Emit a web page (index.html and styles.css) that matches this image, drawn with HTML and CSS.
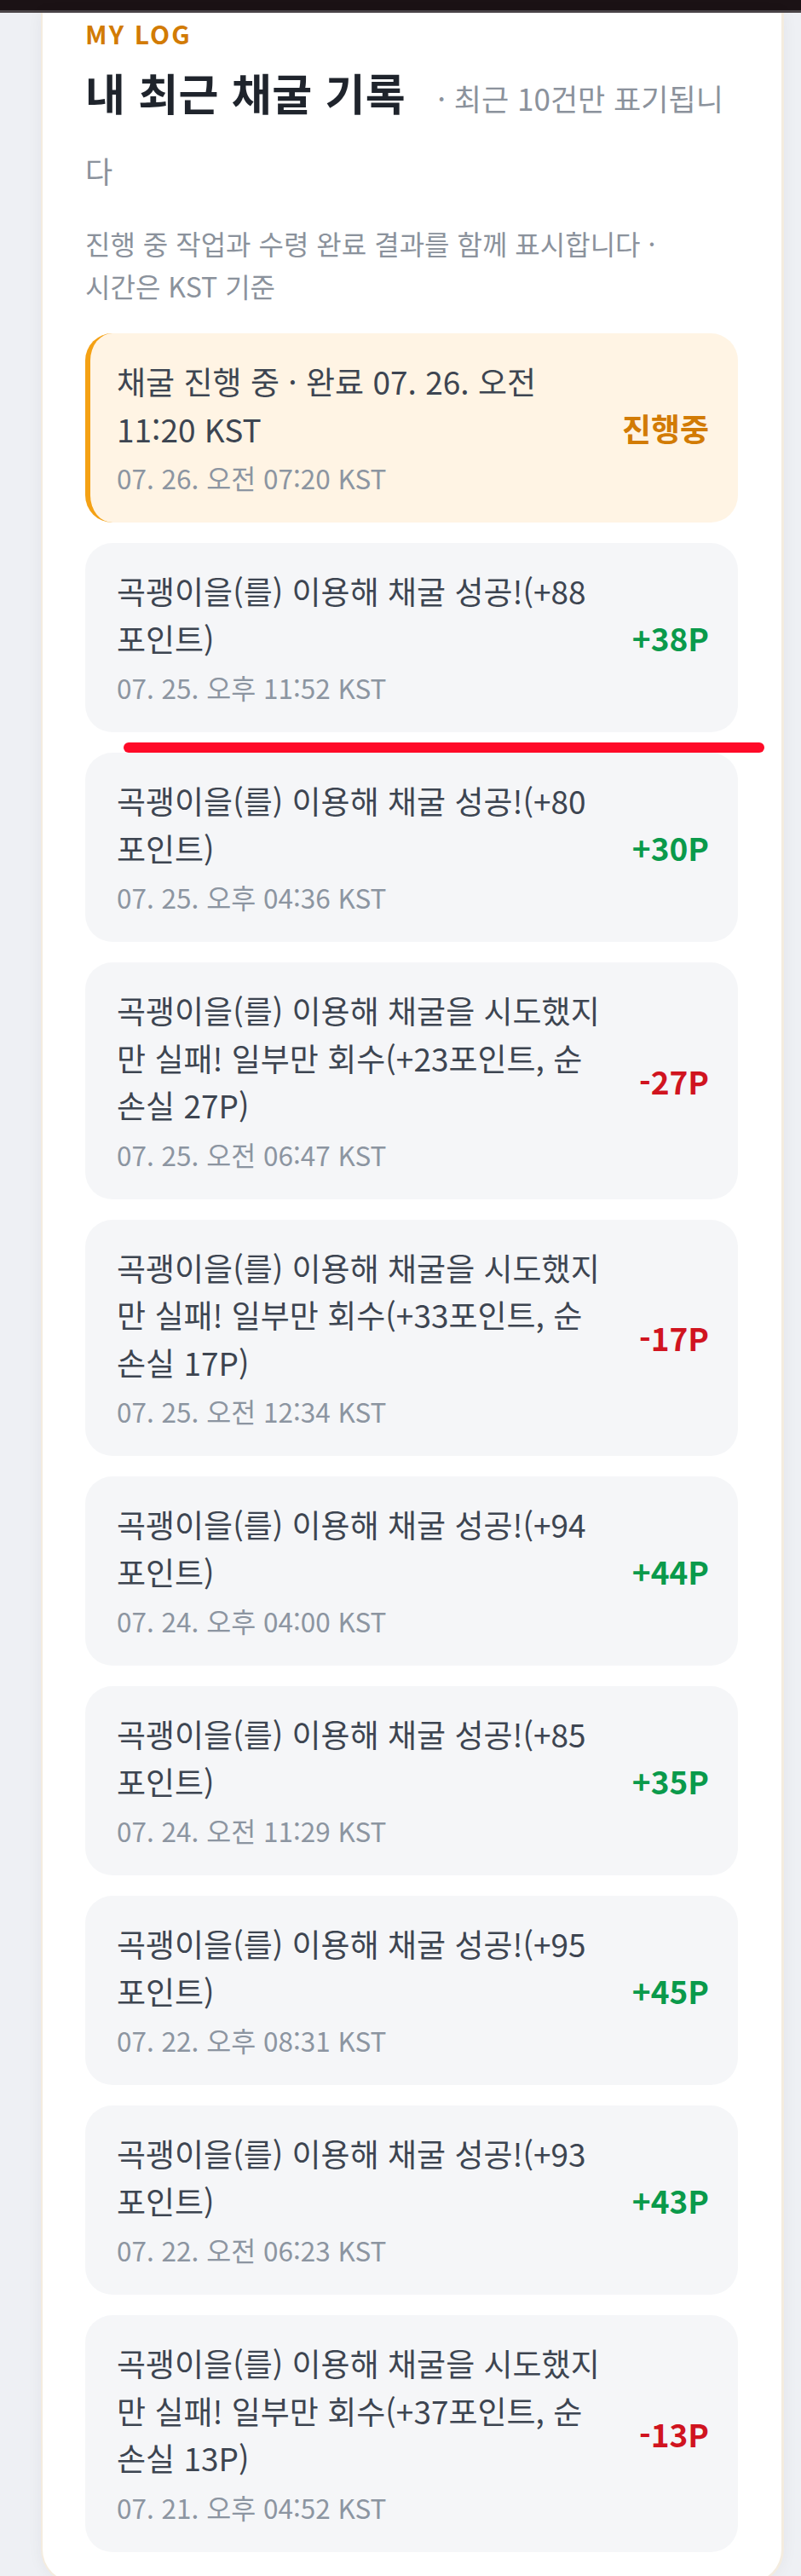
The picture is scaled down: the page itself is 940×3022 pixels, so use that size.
FILE: index.html
```html
<!DOCTYPE html>
<html lang="ko">
<head>
<meta charset="utf-8">
<title>MY LOG</title>
<link rel="stylesheet" href="styles.css">
</head>
<body>
<div class="topbar"></div>
<main class="card">
  <p class="eyebrow">MY LOG</p>
  <h2 class="title">내 최근 채굴 기록<span class="sub">· 최근 10건만 표기됩니다</span></h2>
  <p class="desc">진행 중 작업과 수령 완료 결과를 함께 표시합니다 · 시간은 KST 기준</p>
  <ul class="log">
    <li class="entry pending">
      <div class="main"><p class="msg">채굴 진행 중 · 완료 07. 26. 오전 11:20 KST</p><p class="time">07. 26. 오전 07:20 KST</p></div>
      <span class="amt amt-pending">진행중</span>
    </li>
    <li class="entry marked">
      <div class="main"><p class="msg">곡괭이을(를) 이용해 채굴 성공!(+88 포인트)</p><p class="time">07. 25. 오후 11:52 KST</p></div>
      <span class="amt amt-plus">+38P</span>
      <span class="mark"></span>
    </li>
    <li class="entry">
      <div class="main"><p class="msg">곡괭이을(를) 이용해 채굴 성공!(+80 포인트)</p><p class="time">07. 25. 오후 04:36 KST</p></div>
      <span class="amt amt-plus">+30P</span>
    </li>
    <li class="entry">
      <div class="main"><p class="msg">곡괭이을(를) 이용해 채굴을 시도했지만 실패! 일부만 회수(+23포인트, 순손실 27P)</p><p class="time">07. 25. 오전 06:47 KST</p></div>
      <span class="amt amt-minus">-27P</span>
    </li>
    <li class="entry">
      <div class="main"><p class="msg">곡괭이을(를) 이용해 채굴을 시도했지만 실패! 일부만 회수(+33포인트, 순손실 17P)</p><p class="time">07. 25. 오전 12:34 KST</p></div>
      <span class="amt amt-minus">-17P</span>
    </li>
    <li class="entry">
      <div class="main"><p class="msg">곡괭이을(를) 이용해 채굴 성공!(+94 포인트)</p><p class="time">07. 24. 오후 04:00 KST</p></div>
      <span class="amt amt-plus">+44P</span>
    </li>
    <li class="entry">
      <div class="main"><p class="msg">곡괭이을(를) 이용해 채굴 성공!(+85 포인트)</p><p class="time">07. 24. 오전 11:29 KST</p></div>
      <span class="amt amt-plus">+35P</span>
    </li>
    <li class="entry">
      <div class="main"><p class="msg">곡괭이을(를) 이용해 채굴 성공!(+95 포인트)</p><p class="time">07. 22. 오후 08:31 KST</p></div>
      <span class="amt amt-plus">+45P</span>
    </li>
    <li class="entry">
      <div class="main"><p class="msg">곡괭이을(를) 이용해 채굴 성공!(+93 포인트)</p><p class="time">07. 22. 오전 06:23 KST</p></div>
      <span class="amt amt-plus">+43P</span>
    </li>
    <li class="entry">
      <div class="main"><p class="msg">곡괭이을(를) 이용해 채굴을 시도했지만 실패! 일부만 회수(+37포인트, 순손실 13P)</p><p class="time">07. 21. 오후 04:52 KST</p></div>
      <span class="amt amt-minus">-13P</span>
    </li>
  </ul>
</main>
</body>
</html>
```
FILE: styles.css
```css
* { box-sizing: border-box; }

html, body {
  margin: 0;
  padding: 0;
}

body {
  background: #eef0f4;
  font-family: "Noto Sans CJK KR", "Noto Sans", sans-serif;
  color: #3d4551;
}

.topbar {
  height: 15px;
  background: #1b1215;
  border-bottom: 3px solid #4b4548;
}

.card {
  display: block;
  width: 872px;
  margin-left: 48px;
  background: #ffffff;
  border: 2px solid #f4ecdf;
  border-right-width: 3px;
  border-top: 0;
  border-radius: 0 0 40px 40px;
  padding: 4px 51px 35px 50px;
  box-shadow: 0 0 18px rgba(30, 40, 60, 0.05);
}

.eyebrow {
  margin: 0;
  font-size: 30px;
  line-height: 40px;
  font-weight: 700;
  letter-spacing: 0.07em;
  color: #d27b04;
}

.title {
  margin: 10px 0 0;
  font-size: 51px;
  line-height: 78px;
  font-weight: 700;
  letter-spacing: 0.5px;
  color: #1f242c;
}

.sub {
  margin-left: 37px;
  font-size: 35px;
  font-weight: 400;
  letter-spacing: 0;
  color: #8b929c;
}

.desc {
  margin: 21px 0 0;
  font-size: 32px;
  line-height: 50px;
  color: #8b929c;
  word-break: keep-all;
}

.log {
  list-style: none;
  margin: 31px 0 0;
  padding: 0;
  display: flex;
  flex-direction: column;
  gap: 24px;
}

.entry {
  position: relative;
  display: flex;
  align-items: center;
  background: #f5f6f8;
  border-radius: 32px;
  padding: 29px 34px 29px 37px;
}

.entry.pending {
  background: #fff4e4;
  border-left: 6px solid #f4a114;
  padding-left: 31px;
}

.main {
  flex: 1 1 auto;
  min-width: 0;
  max-width: 574px;
}

.msg {
  margin: 0;
  font-size: 37px;
  line-height: 55.5px;
  color: #3d4551;
}

.time {
  margin: 5px 0 0;
  font-size: 31.5px;
  line-height: 48px;
  color: #8c95a1;
}

.amt {
  margin-left: auto;
  padding-left: 16px;
  font-size: 37px;
  font-weight: 700;
  white-space: nowrap;
}

.amt-pending { color: #d27b04; }
.amt-plus { color: #0a9a4b; }
.amt-minus { color: #d0141f; }

.mark {
  position: absolute;
  left: 45px;
  bottom: -24px;
  width: 752px;
  height: 12px;
  border-radius: 6px;
  background: #ff0a28;
}
```
